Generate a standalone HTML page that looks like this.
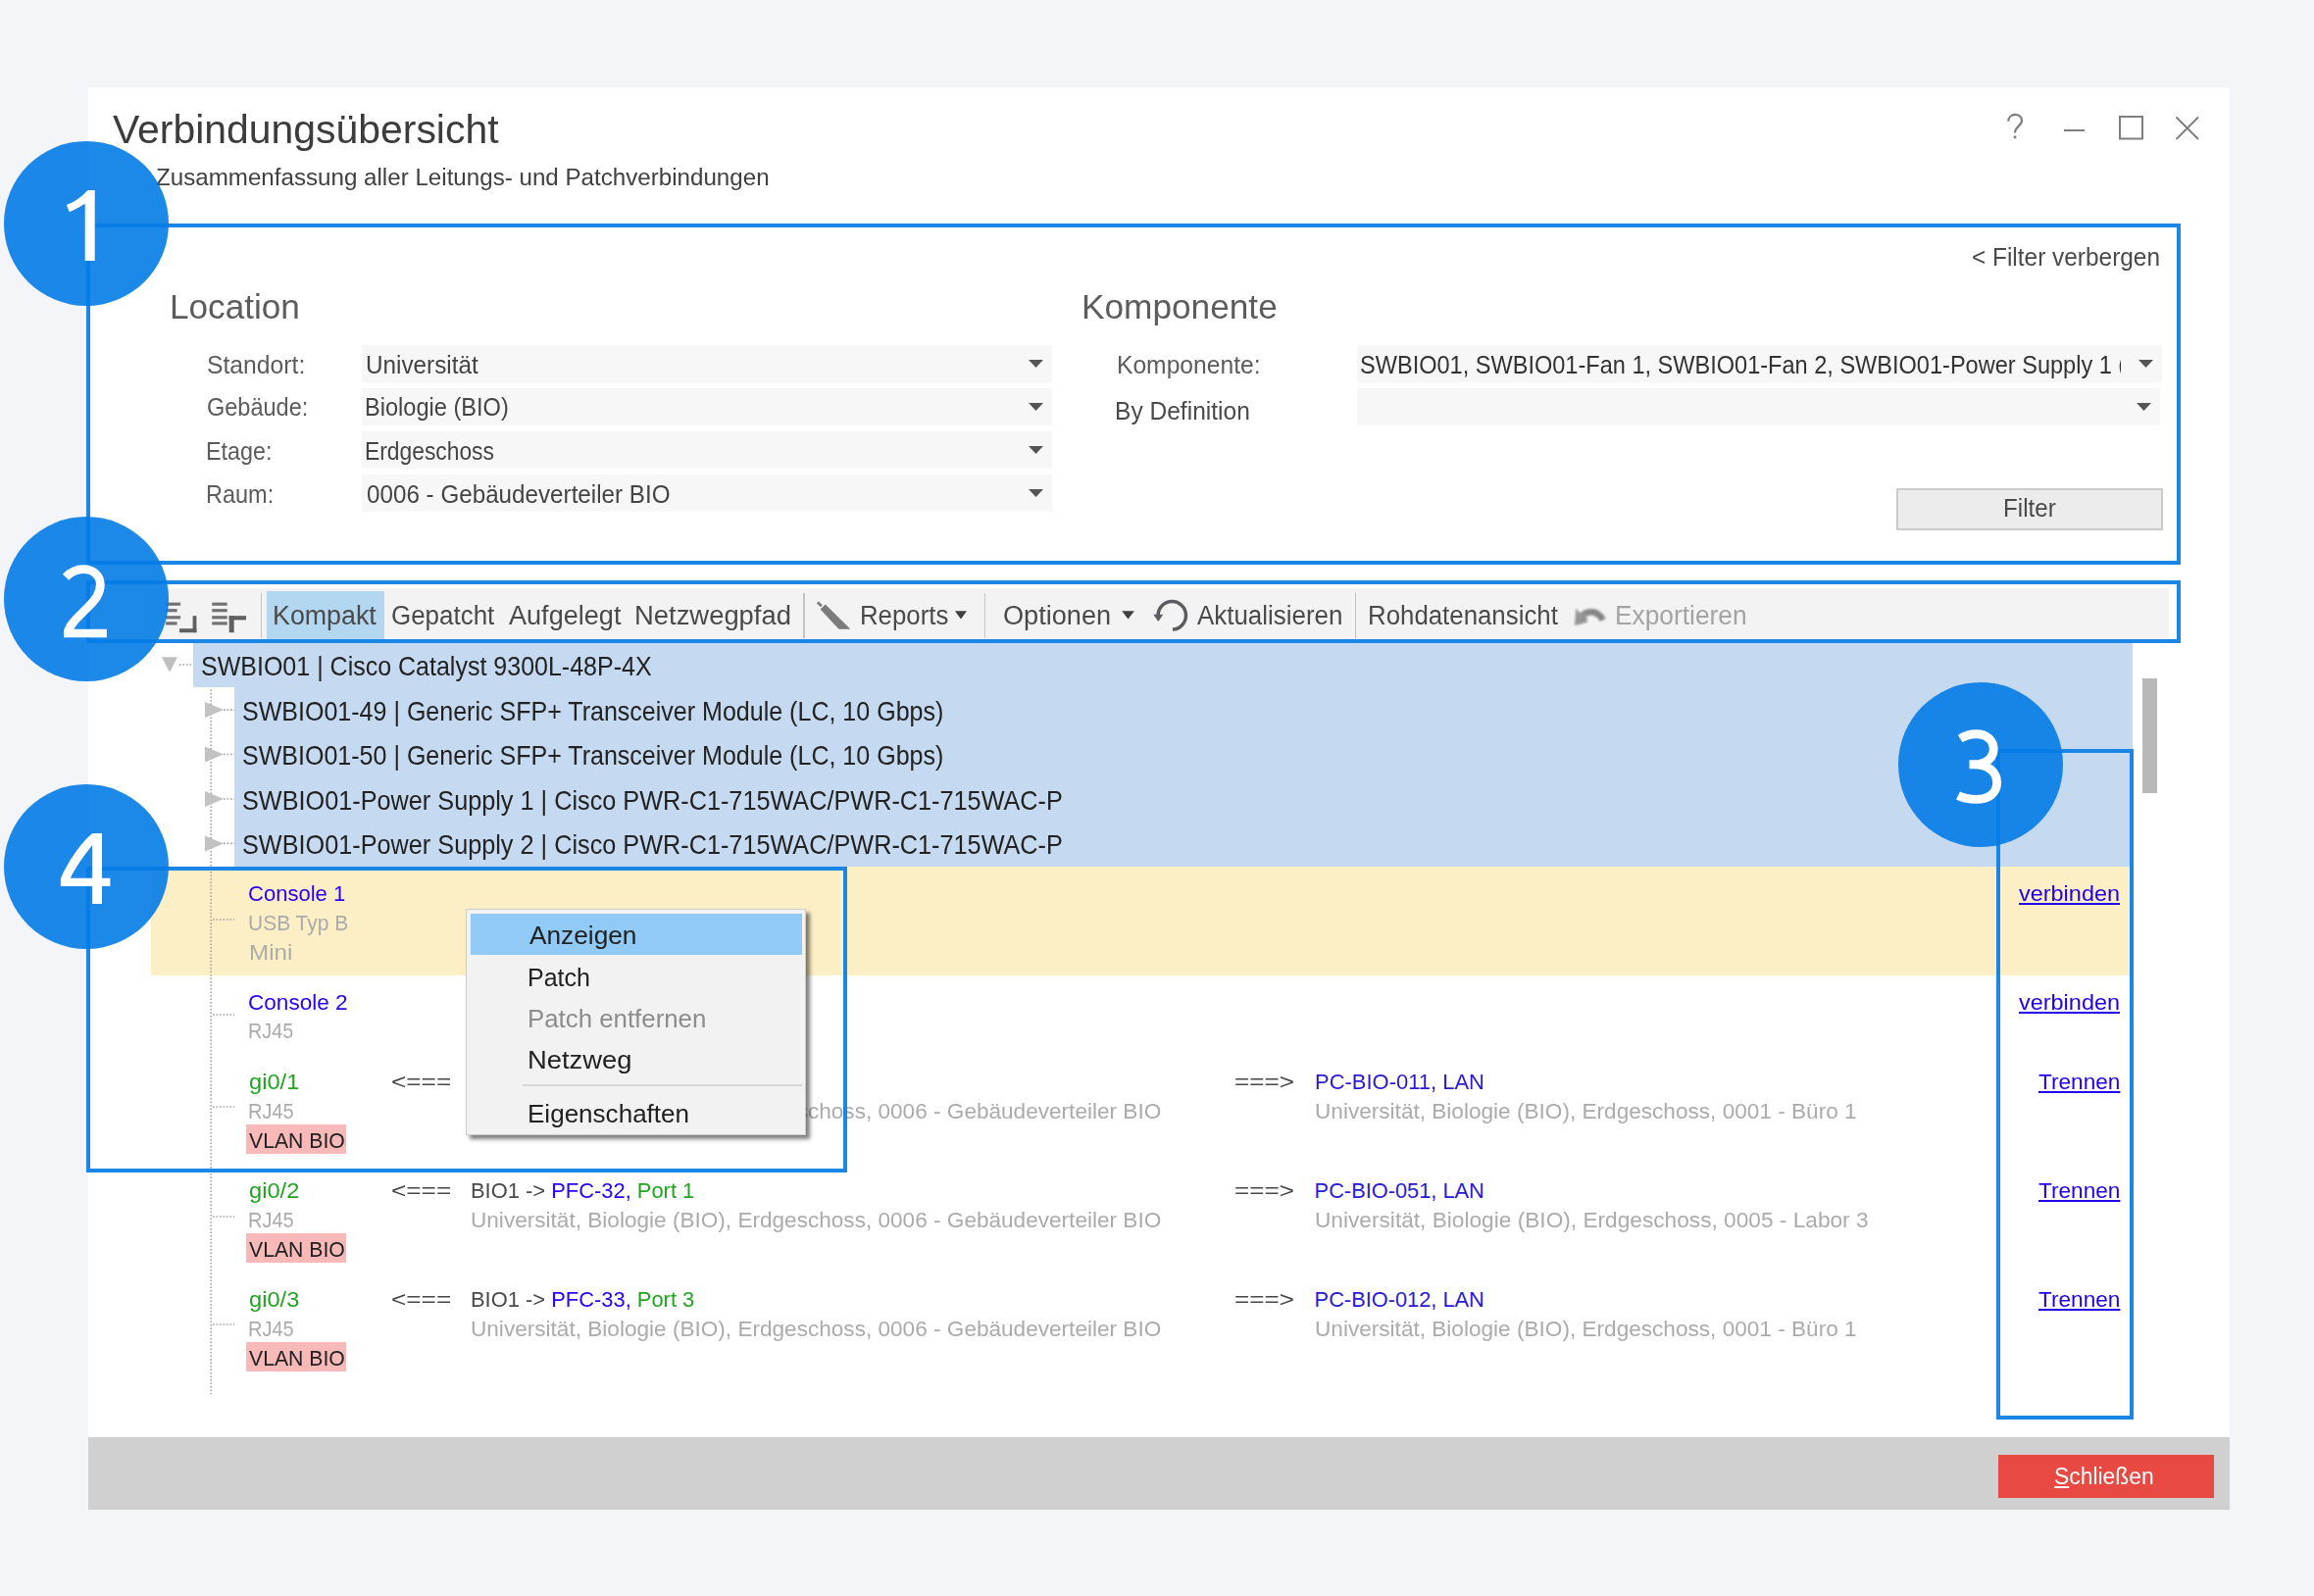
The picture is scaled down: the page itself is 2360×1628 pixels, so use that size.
<!DOCTYPE html>
<html><head><meta charset="utf-8"><style>
html,body{margin:0;padding:0;}
body{width:2360px;height:1628px;background:#f3f5f9;position:relative;overflow:hidden;font-family:"Liberation Sans",sans-serif;}
body>div,body>span,body>svg,body>div>span{position:absolute;}
span{white-space:nowrap;line-height:1em;transform-origin:0 0;}
span span,span u{position:static;}
</style></head><body>
<div style="left:89.5px;top:88.5px;width:2184px;height:1451.5px;background:#fff;"></div>
<div style="left:89.5px;top:1466.3px;width:2184px;height:73.4px;background:#d0d0d0;"></div>
<span style="left:114.60px;top:110.57px;font-size:41.5px;color:#3c3c3c;transform:scaleX(0.9860);">Verbindungsübersicht</span>
<span style="left:158.80px;top:169.01px;font-size:24.8px;color:#404040;transform:scaleX(0.9739);">Zusammenfassung aller Leitungs- und Patchverbindungen</span>
<svg style="left:2040px;top:110px" width="210" height="40" viewBox="2040 110 210 40"><path d="M2048.3 123.8 C2048.3 114.8 2062 114.8 2062 123 C2062 128.5 2055 129 2055 135.5" stroke="#7f7f7f" stroke-width="2.2" fill="none"/><circle cx="2055" cy="139.8" r="1.5" fill="#7f7f7f"/><line x1="2105" y1="133" x2="2126" y2="133" stroke="#7f7f7f" stroke-width="2"/><rect x="2162" y="119" width="23" height="22.5" stroke="#7f7f7f" stroke-width="2" fill="none"/><path d="M2219.5 119.5 L2242 142 M2242 119.5 L2219.5 142" stroke="#7f7f7f" stroke-width="2" fill="none"/></svg>
<span style="left:2011.34px;top:249.71px;font-size:25.5px;color:#4a4a4a;transform:scaleX(0.9573);">&lt; Filter verbergen</span>
<span style="left:173.41px;top:295.42px;font-size:35.3px;color:#5c5c5c;transform:scaleX(0.9960);">Location</span>
<span style="left:1103.00px;top:295.22px;font-size:35.3px;color:#5c5c5c;transform:scaleX(0.9978);">Komponente</span>
<div style="left:369px;top:352px;width:704px;height:38px;background:#f7f7f7;"></div>
<span style="left:210.62px;top:360.47px;font-size:25.2px;color:#5c5c5c;transform:scaleX(0.9807);">Standort:</span>
<span style="left:373.04px;top:360.47px;font-size:25.2px;color:#444444;transform:scaleX(0.9646);">Universität</span>
<svg style="left:1049px;top:367px" width="15" height="8"><path d="M0 0 L15 0 L7.5 8 Z" fill="#555"/></svg>
<div style="left:369px;top:396px;width:704px;height:38px;background:#f7f7f7;"></div>
<span style="left:210.67px;top:403.47px;font-size:25.2px;color:#5c5c5c;transform:scaleX(0.9337);">Gebäude:</span>
<span style="left:372.13px;top:403.47px;font-size:25.2px;color:#444444;transform:scaleX(0.9361);">Biologie (BIO)</span>
<svg style="left:1049px;top:411px" width="15" height="8"><path d="M0 0 L15 0 L7.5 8 Z" fill="#555"/></svg>
<div style="left:369px;top:440.4px;width:704px;height:38px;background:#f7f7f7;"></div>
<span style="left:209.75px;top:448.17px;font-size:25.2px;color:#5c5c5c;transform:scaleX(0.9256);">Etage:</span>
<span style="left:372.19px;top:448.17px;font-size:25.2px;color:#444444;transform:scaleX(0.9062);">Erdgeschoss</span>
<svg style="left:1049px;top:455.4px" width="15" height="8"><path d="M0 0 L15 0 L7.5 8 Z" fill="#555"/></svg>
<div style="left:369px;top:483.8px;width:704px;height:38px;background:#f7f7f7;"></div>
<span style="left:209.73px;top:492.07px;font-size:25.2px;color:#5c5c5c;transform:scaleX(0.9332);">Raum:</span>
<span style="left:374.00px;top:492.07px;font-size:25.2px;color:#444444;transform:scaleX(0.9613);">0006 - Gebäudeverteiler BIO</span>
<svg style="left:1049px;top:498.8px" width="15" height="8"><path d="M0 0 L15 0 L7.5 8 Z" fill="#555"/></svg>
<div style="left:1383.5px;top:352px;width:821px;height:38px;background:#f7f7f7;"></div>
<div style="left:1383.5px;top:396px;width:819.5px;height:38px;background:#f7f7f7;"></div>
<span style="left:1138.64px;top:359.97px;font-size:25.2px;color:#5c5c5c;transform:scaleX(0.9778);">Komponente:</span>
<span style="left:1136.75px;top:407.37px;font-size:25.2px;color:#4a4a4a;transform:scaleX(0.9748);">By Definition</span>
<div style="left:1383px;top:352px;width:779.5px;height:38px;overflow:hidden"><span style="left:4.27px;top:7.97px;font-size:25.2px;color:#333333;transform:scaleX(0.9348);">SWBIO01, SWBIO01-Fan 1, SWBIO01-Fan 2, SWBIO01-Power Supply 1 (SWBIO01-Power Supply 2</span></div>
<svg style="left:2181px;top:367px" width="15" height="8"><path d="M0 0 L15 0 L7.5 8 Z" fill="#555"/></svg>
<svg style="left:2179px;top:411px" width="15" height="8"><path d="M0 0 L15 0 L7.5 8 Z" fill="#555"/></svg>
<div style="left:1934px;top:497.8px;width:272.4px;height:43.6px;background:#ececec;box-sizing:border-box;border:2px solid #cbcbcb"></div>
<span style="left:2042.78px;top:506.27px;font-size:25.2px;color:#4a4a4a;transform:scaleX(0.9593);">Filter</span>
<div style="left:152px;top:600px;width:2060px;height:52px;background:#f3f3f3;"></div>
<div style="left:272.4px;top:603px;width:119.3px;height:49px;background:#b3d7f1;"></div>
<div style="left:266px;top:605px;width:1.2px;height:46px;background:#c4c4c4;"></div>
<div style="left:819.4px;top:605px;width:1.2px;height:46px;background:#c4c4c4;"></div>
<div style="left:1004.2px;top:605px;width:1.2px;height:46px;background:#c4c4c4;"></div>
<div style="left:1382.2px;top:605px;width:1.2px;height:46px;background:#c4c4c4;"></div>
<span style="left:278.21px;top:614.94px;font-size:27px;color:#4a4a4a;transform:scaleX(0.9929);">Kompakt</span>
<span style="left:398.54px;top:614.94px;font-size:27px;color:#4a4a4a;transform:scaleX(0.9609);">Gepatcht</span>
<span style="left:519.30px;top:614.94px;font-size:27px;color:#4a4a4a;transform:scaleX(1.0027);">Aufgelegt</span>
<span style="left:646.67px;top:614.94px;font-size:27px;color:#4a4a4a;transform:scaleX(1.0150);">Netzwegpfad</span>
<span style="left:876.79px;top:614.94px;font-size:27px;color:#4a4a4a;transform:scaleX(0.9550);">Reports</span>
<span style="left:1022.80px;top:614.94px;font-size:27px;color:#4a4a4a;transform:scaleX(1.0050);">Optionen</span>
<span style="left:1221.30px;top:614.94px;font-size:27px;color:#4a4a4a;transform:scaleX(0.9599);">Aktualisieren</span>
<span style="left:1395.29px;top:614.94px;font-size:27px;color:#4a4a4a;transform:scaleX(0.9565);">Rohdatenansicht</span>
<span style="left:1646.65px;top:614.94px;font-size:27px;color:#a3a3a3;transform:scaleX(0.9744);">Exportieren</span>
<svg style="left:0;top:0" width="2360" height="700" viewBox="0 0 2360 700"><g fill="#737373"><rect x="169" y="614.6" width="15.1" height="3.2"/><rect x="169" y="621.1" width="11.6" height="3.2"/><rect x="169" y="628.2" width="15.1" height="3.2"/><rect x="169" y="634.3" width="11.6" height="3.2"/><rect x="216.2" y="614.6" width="15.5" height="3.2"/><rect x="216.2" y="621.1" width="15.5" height="3.2"/><rect x="216.2" y="628.2" width="15.5" height="3.2"/><rect x="216.2" y="634.3" width="15.5" height="3.2"/></g><g fill="#606060"><rect x="196.6" y="628.2" width="3.8" height="17"/><rect x="183" y="641.2" width="17.4" height="4"/><rect x="233.7" y="628.2" width="17.3" height="4.2"/><rect x="233.7" y="628.2" width="5" height="17"/></g><path d="M833.8 614.2 L837.8 618.2" stroke="#808080" stroke-width="3"/><path d="M836.6 621.6 L841.8 616.6 L867.4 641.8 L855.5 641.8 Z" fill="#7c7c7c"/><path d="M973.9 623.3 L986 623.3 L980 631.5 Z" fill="#404040"/><path d="M1144.2 623.3 L1156.9 623.3 L1150.5 631.5 Z" fill="#404040"/><path d="M1196 642 A14.2 14.2 0 1 0 1181.1 627.8" stroke="#5a5c60" stroke-width="3.5" fill="none"/><path d="M1176.3 626.8 L1186.3 626.8 L1181.3 634 Z" fill="#5a5c60"/><g style="filter:blur(0.9px)"><path d="M1612 630 C1615 625.5 1619 624.3 1623 624.3 C1628 624.3 1632 627.5 1634.8 632.5" stroke="#858585" stroke-width="6.5" fill="none"/><path d="M1607.3 620.5 L1611.5 625.5 L1618 626 L1619 634.8 L1606 638 Z" fill="#959595"/></g></svg>
<div style="left:197px;top:656px;width:1978px;height:45.4px;background:#c5d9f0;"></div>
<div style="left:239.3px;top:701.4px;width:1935.7px;height:182.6px;background:#c5d9f0;"></div>
<div style="left:154.3px;top:884px;width:2018.7px;height:111px;background:#fdefc5;"></div>
<span style="left:204.68px;top:666.36px;font-size:27.1px;color:#222222;transform:scaleX(0.9230);">SWBIO01 | Cisco Catalyst 9300L-48P-4X</span>
<span style="left:247.08px;top:711.76px;font-size:27.1px;color:#222222;transform:scaleX(0.9239);">SWBIO01-49 | Generic SFP+ Transceiver Module (LC, 10 Gbps)</span>
<span style="left:247.08px;top:757.06px;font-size:27.1px;color:#222222;transform:scaleX(0.9239);">SWBIO01-50 | Generic SFP+ Transceiver Module (LC, 10 Gbps)</span>
<span style="left:247.07px;top:802.96px;font-size:27.1px;color:#222222;transform:scaleX(0.9321);">SWBIO01-Power Supply 1 | Cisco PWR-C1-715WAC/PWR-C1-715WAC-P</span>
<span style="left:247.07px;top:848.26px;font-size:27.1px;color:#222222;transform:scaleX(0.9321);">SWBIO01-Power Supply 2 | Cisco PWR-C1-715WAC/PWR-C1-715WAC-P</span>
<svg style="left:0;top:0" width="2360" height="1628" viewBox="0 0 2360 1628"><path d="M165 670.3 L181 670.3 L173 685.8 Z" fill="#bfbfbf"/><line x1="183" y1="678" x2="197" y2="678" stroke="#a3a3a3" stroke-width="1.7" stroke-dasharray="1.6 1.9"/><line x1="215.2" y1="703.4" x2="215.2" y2="1422" stroke="#a3a3a3" stroke-width="1.7" stroke-dasharray="1.6 1.9"/><path d="M209 716.1 L228 724.1 L209 732.1 Z" fill="#c2c2c2"/><line x1="228" y1="724.1" x2="239" y2="724.1" stroke="#a3a3a3" stroke-width="1.7" stroke-dasharray="1.6 1.9"/><path d="M209 761.5 L228 769.5 L209 777.5 Z" fill="#c2c2c2"/><line x1="228" y1="769.5" x2="239" y2="769.5" stroke="#a3a3a3" stroke-width="1.7" stroke-dasharray="1.6 1.9"/><path d="M209 807.0 L228 815.0 L209 823.0 Z" fill="#c2c2c2"/><line x1="228" y1="815.0" x2="239" y2="815.0" stroke="#a3a3a3" stroke-width="1.7" stroke-dasharray="1.6 1.9"/><path d="M209 852.4 L228 860.4 L209 868.4 Z" fill="#c2c2c2"/><line x1="228" y1="860.4" x2="239" y2="860.4" stroke="#a3a3a3" stroke-width="1.7" stroke-dasharray="1.6 1.9"/><line x1="217" y1="938" x2="239" y2="938" stroke="#a3a3a3" stroke-width="1.7" stroke-dasharray="1.6 1.9"/><line x1="217" y1="1035" x2="239" y2="1035" stroke="#a3a3a3" stroke-width="1.7" stroke-dasharray="1.6 1.9"/><line x1="217" y1="1129" x2="239" y2="1129" stroke="#a3a3a3" stroke-width="1.7" stroke-dasharray="1.6 1.9"/><line x1="217" y1="1241" x2="239" y2="1241" stroke="#a3a3a3" stroke-width="1.7" stroke-dasharray="1.6 1.9"/><line x1="217" y1="1351" x2="239" y2="1351" stroke="#a3a3a3" stroke-width="1.7" stroke-dasharray="1.6 1.9"/></svg>
<span style="left:253.09px;top:901.45px;font-size:21.8px;color:#2a00f8;transform:scaleX(1.0111);">Console 1</span>
<span style="left:253.14px;top:930.75px;font-size:21.8px;color:#ababab;transform:scaleX(0.9632);">USB Typ B</span>
<span style="left:253.59px;top:960.65px;font-size:21.8px;color:#ababab;transform:scaleX(1.1096);">Mini</span>
<span style="left:253.07px;top:1011.95px;font-size:21.8px;color:#2a00f8;transform:scaleX(1.0348);">Console 2</span>
<span style="left:253.19px;top:1041.25px;font-size:21.8px;color:#ababab;transform:scaleX(0.9063);">RJ45</span>
<span style="left:253.50px;top:1092.75px;font-size:21.8px;color:#22a322;transform:scaleX(1.0861);">gi0/1</span>
<span style="left:252.58px;top:1122.85px;font-size:21.8px;color:#ababab;transform:scaleX(0.9164);">RJ45</span>
<div style="left:251.4px;top:1147.0px;width:101.6px;height:29.6px;background:#f9b9b9;"></div>
<span style="left:253.50px;top:1152.65px;font-size:21.8px;color:#222222;transform:scaleX(0.9730);">VLAN BIO</span>
<span style="left:398.50px;top:1092.75px;font-size:21.8px;color:#474747;transform:scaleX(1.2015);">&lt;===</span>
<span style="left:479.60px;top:1092.75px;font-size:21.8px;color:#4a4a4a;transform:scaleX(1.0048);">BIO1 -&gt; <span style="color:#2a00f8">PFC-31,</span> <span style="color:#22a322">Port 1</span></span>
<span style="left:479.56px;top:1122.85px;font-size:21.8px;color:#ababab;transform:scaleX(1.0362);">Universität, Biologie (BIO), Erdgeschoss, 0006 - Gebäudeverteiler BIO</span>
<span style="left:1258.70px;top:1092.75px;font-size:21.8px;color:#474747;transform:scaleX(1.1975);">===&gt;</span>
<span style="left:1340.59px;top:1092.75px;font-size:21.8px;color:#2a1ad8;transform:scaleX(1.0079);">PC-BIO-011, LAN</span>
<span style="left:1340.56px;top:1122.85px;font-size:21.8px;color:#ababab;transform:scaleX(1.0366);">Universität, Biologie (BIO), Erdgeschoss, 0001 - Büro 1</span>
<span style="left:2078.50px;top:1092.75px;font-size:21.8px;color:#2200ee;transform:scaleX(1.0372);text-decoration:underline;text-underline-offset:2px">Trennen</span>
<span style="left:253.50px;top:1203.85px;font-size:21.8px;color:#22a322;transform:scaleX(1.0861);">gi0/2</span>
<span style="left:252.58px;top:1233.95px;font-size:21.8px;color:#ababab;transform:scaleX(0.9164);">RJ45</span>
<div style="left:251.4px;top:1258.1px;width:101.6px;height:29.6px;background:#f9b9b9;"></div>
<span style="left:253.50px;top:1263.75px;font-size:21.8px;color:#222222;transform:scaleX(0.9730);">VLAN BIO</span>
<span style="left:398.50px;top:1203.85px;font-size:21.8px;color:#474747;transform:scaleX(1.2015);">&lt;===</span>
<span style="left:479.60px;top:1203.85px;font-size:21.8px;color:#4a4a4a;transform:scaleX(1.0048);">BIO1 -&gt; <span style="color:#2a00f8">PFC-32,</span> <span style="color:#22a322">Port 1</span></span>
<span style="left:479.56px;top:1233.95px;font-size:21.8px;color:#ababab;transform:scaleX(1.0362);">Universität, Biologie (BIO), Erdgeschoss, 0006 - Gebäudeverteiler BIO</span>
<span style="left:1258.70px;top:1203.85px;font-size:21.8px;color:#474747;transform:scaleX(1.1975);">===&gt;</span>
<span style="left:1340.60px;top:1203.85px;font-size:21.8px;color:#2a1ad8;">PC-BIO-051, LAN</span>
<span style="left:1340.56px;top:1233.95px;font-size:21.8px;color:#ababab;transform:scaleX(1.0402);">Universität, Biologie (BIO), Erdgeschoss, 0005 - Labor 3</span>
<span style="left:2078.50px;top:1203.85px;font-size:21.8px;color:#2200ee;transform:scaleX(1.0372);text-decoration:underline;text-underline-offset:2px">Trennen</span>
<span style="left:253.50px;top:1314.95px;font-size:21.8px;color:#22a322;transform:scaleX(1.0861);">gi0/3</span>
<span style="left:252.58px;top:1345.05px;font-size:21.8px;color:#ababab;transform:scaleX(0.9164);">RJ45</span>
<div style="left:251.4px;top:1369.2px;width:101.6px;height:29.6px;background:#f9b9b9;"></div>
<span style="left:253.50px;top:1374.85px;font-size:21.8px;color:#222222;transform:scaleX(0.9730);">VLAN BIO</span>
<span style="left:398.50px;top:1314.95px;font-size:21.8px;color:#474747;transform:scaleX(1.2015);">&lt;===</span>
<span style="left:479.60px;top:1314.95px;font-size:21.8px;color:#4a4a4a;transform:scaleX(1.0048);">BIO1 -&gt; <span style="color:#2a00f8">PFC-33,</span> <span style="color:#22a322">Port 3</span></span>
<span style="left:479.56px;top:1345.05px;font-size:21.8px;color:#ababab;transform:scaleX(1.0362);">Universität, Biologie (BIO), Erdgeschoss, 0006 - Gebäudeverteiler BIO</span>
<span style="left:1258.70px;top:1314.95px;font-size:21.8px;color:#474747;transform:scaleX(1.1975);">===&gt;</span>
<span style="left:1340.60px;top:1314.95px;font-size:21.8px;color:#2a1ad8;">PC-BIO-012, LAN</span>
<span style="left:1340.56px;top:1345.05px;font-size:21.8px;color:#ababab;transform:scaleX(1.0366);">Universität, Biologie (BIO), Erdgeschoss, 0001 - Büro 1</span>
<span style="left:2078.50px;top:1314.95px;font-size:21.8px;color:#2200ee;transform:scaleX(1.0372);text-decoration:underline;text-underline-offset:2px">Trennen</span>
<span style="left:2059.00px;top:901.45px;font-size:21.8px;color:#2200ee;transform:scaleX(1.0760);text-decoration:underline;text-underline-offset:2px">verbinden</span>
<span style="left:2059.00px;top:1011.95px;font-size:21.8px;color:#2200ee;transform:scaleX(1.0760);text-decoration:underline;text-underline-offset:2px">verbinden</span>
<div style="left:2185.3px;top:692.4px;width:14.4px;height:116.3px;background:#b8b8b8;"></div>
<div style="left:475px;top:927.1px;width:346.5px;height:231.4px;background:#f2f2f2;box-sizing:border-box;border:1px solid #cccccc;box-shadow:4px 4px 4px rgba(0,0,0,0.5)"></div>
<div style="left:480px;top:932px;width:337.5px;height:41.8px;background:#91c9f7;"></div>
<span style="left:539.80px;top:941.32px;font-size:26.2px;color:#222222;transform:scaleX(1.0025);">Anzeigen</span>
<span style="left:537.89px;top:983.92px;font-size:26.2px;color:#222222;transform:scaleX(0.9543);">Patch</span>
<span style="left:537.83px;top:1026.42px;font-size:26.2px;color:#8c8c8c;transform:scaleX(0.9860);">Patch entfernen</span>
<span style="left:537.71px;top:1067.92px;font-size:26.2px;color:#222222;transform:scaleX(1.0445);">Netzweg</span>
<div style="left:533px;top:1106.3px;width:284.5px;height:1.6px;background:#d6d6d6;"></div>
<span style="left:537.81px;top:1123.32px;font-size:26.2px;color:#222222;transform:scaleX(0.9944);">Eigenschaften</span>
<div style="left:2037.9px;top:1484px;width:220px;height:43.9px;background:#e84a43;"></div>
<span style="left:2095.06px;top:1493.61px;font-size:24.2px;color:#ffffff;transform:scaleX(0.9448);"><u>S</u>chließen</span>
<div style="left:88px;top:228px;width:2128px;height:340px;border:4px solid #1a86e6;"></div>
<div style="left:88px;top:592px;width:2128px;height:56px;border:4px solid #1a86e6;"></div>
<div style="left:2036px;top:764px;width:132px;height:676px;border:4px solid #1a86e6;"></div>
<div style="left:88px;top:884.3px;width:768px;height:303.9000000000001px;border:4px solid #1a86e6;"></div>
<div style="left:4px;top:144px;width:168px;height:168px;border-radius:50%;background:rgba(3,123,230,0.9)"></div>
<div style="left:4px;top:527px;width:168px;height:168px;border-radius:50%;background:rgba(3,123,230,0.9)"></div>
<div style="left:1936px;top:695.5px;width:168px;height:168px;border-radius:50%;background:rgba(3,123,230,0.9)"></div>
<div style="left:4px;top:800px;width:168px;height:168px;border-radius:50%;background:rgba(3,123,230,0.9)"></div>
<svg style="left:0;top:0" width="2360" height="1000" viewBox="0 0 2360 1000"><path fill="#fff" d="M89.5 193.9 H96.7 V266 H86.7 V207.8 C81 211.5 76 214 70.8 216.3 L67.8 209 C76 206 83 201 89.5 193.9 Z"/><path fill="none" stroke="#fff" stroke-width="8.8" d="M67 588.8 C72 583.5 78 580.6 84.8 580.6 C95.5 580.6 102.3 587.3 102.3 596.5 C102.3 605.5 97.5 611.5 89.5 619.5 L80.5 628.5 C72.5 636.5 69.5 641 69.5 646.5"/><path fill="#fff" d="M65 641.8 H108.9 V650.2 H65 Z"/><path fill="none" stroke="#fff" stroke-width="8.9" d="M1999.2 753.5 C2004 750.5 2009.5 748.8 2015.5 748.8 C2026 748.8 2033.2 755 2033.2 764 C2033.2 773.5 2025 779.8 2013 779.8 L2008.5 779.8 M2008.5 779.8 L2013 779.8 C2028 779.8 2036.6 787.5 2036.6 798.5 C2036.6 809 2028 815.4 2015.5 815.4 C2008 815.4 2002 814 1997 811.5"/><path fill="#fff" fill-rule="evenodd" d="M104 849.9 V895.7 H112.4 V903.9 H104 V922.1 H94.2 V903.9 H61.9 V896.5 C66 885 80 862 94 849.9 Z M94.2 862 V895.7 H71.8 C77 885 86 872 94.2 862 Z"/></svg>
</body></html>
